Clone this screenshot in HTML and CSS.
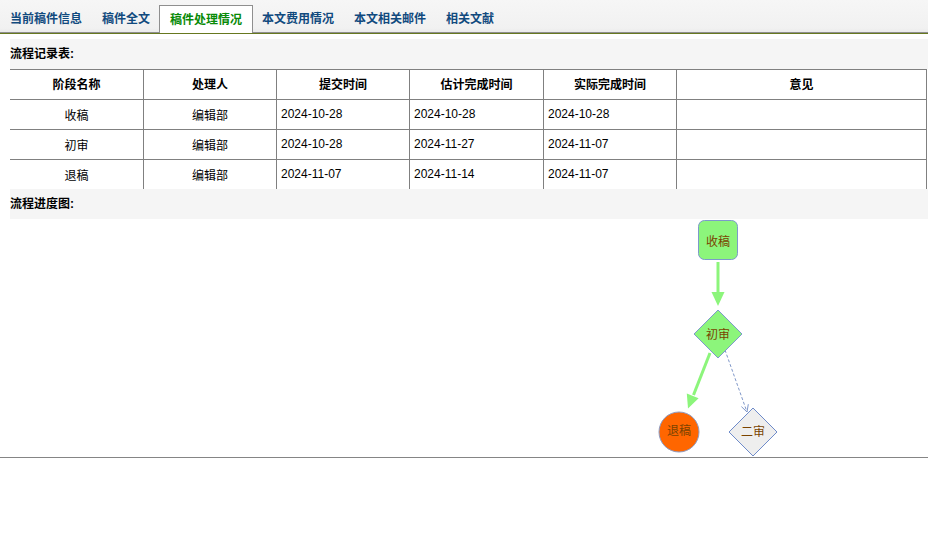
FILE: index.html
```html
<!DOCTYPE html>
<html lang="zh-CN">
<head>
<meta charset="utf-8">
<title>稿件处理情况</title>
<link rel="stylesheet" href="styles.css">
</head>
<body>
<div class="tabbar">
  <a class="tab">当前稿件信息</a>
  <a class="tab">稿件全文</a>
  <a class="tab active">稿件处理情况</a>
  <a class="tab">本文费用情况</a>
  <a class="tab">本文相关邮件</a>
  <a class="tab">相关文献</a>
</div>
<div class="content">
  <div class="section-title">流程记录表:</div>
  <table class="records">
    <colgroup>
      <col class="c1"><col class="c2"><col class="c3"><col class="c4"><col class="c5"><col class="c6">
    </colgroup>
    <thead>
      <tr><th>阶段名称</th><th>处理人</th><th>提交时间</th><th>估计完成时间</th><th>实际完成时间</th><th>意见</th></tr>
    </thead>
    <tbody>
      <tr><td class="center">收稿</td><td class="center">编辑部</td><td>2024-10-28</td><td>2024-10-28</td><td>2024-10-28</td><td></td></tr>
      <tr><td class="center">初审</td><td class="center">编辑部</td><td>2024-10-28</td><td>2024-11-27</td><td>2024-11-07</td><td></td></tr>
      <tr><td class="center">退稿</td><td class="center">编辑部</td><td>2024-11-07</td><td>2024-11-14</td><td>2024-11-07</td><td></td></tr>
    </tbody>
  </table>
  <div class="section-title">流程进度图:</div>
</div>
<div class="chart">
  <svg class="flow" width="928" height="238" viewBox="0 0 928 238">
    <!-- arrow 收稿 -> 初审 -->
    <line x1="718" y1="43" x2="718" y2="74" class="ok-line"/>
    <polygon points="711.5,73 724.5,73 718,87" class="ok-head"/>
    <!-- arrow 初审 -> 退稿 -->
    <line x1="710" y1="134" x2="693.5" y2="176" class="ok-line"/>
    <polygon points="698.6,179.3 686.8,174.6 688,189.5" class="ok-head"/>
    <!-- dashed 初审 -> 二审 -->
    <line x1="725" y1="131" x2="747" y2="193" class="todo-line"/>
    <polyline points="748.3,185.2 747,193 741.4,187.6" class="todo-head"/>
    <!-- nodes -->
    <rect x="698.5" y="1.5" width="39" height="39" rx="6" class="node done"/>
    <text x="718" y="27" class="label">收稿</text>
    <polygon points="694,115 718,91 742,115 718,139" class="node done"/>
    <text x="718" y="120" class="label">初审</text>
    <circle cx="679" cy="213" r="20" class="node reject"/>
    <text x="679" y="216" class="label">退稿</text>
    <polygon points="729,213 753,189 777,213 753,237" class="node pending"/>
    <text x="753" y="217" class="label">二审</text>
  </svg>
</div>
</body>
</html>
```

FILE: styles.css
```css
* { box-sizing: border-box; }
html, body {
  margin: 0;
  padding: 0;
  background: #ffffff;
  font-family: "Liberation Sans", "Noto Sans CJK SC", Arial, sans-serif;
  font-size: 12px;
  color: #000;
}
.tabbar {
  display: flex;
  align-items: flex-end;
  height: 34px;
  background: linear-gradient(#f6f6f6, #f1f1f1 85%, #e9e9e9);
  border-bottom: 1px solid #67781f;
  box-shadow: inset 0 -1px 0 #8e8e8e;
}
.tab {
  display: block;
  height: 28px;
  line-height: 27px;
  padding: 1px 10px 0 10px;
  font-weight: bold;
  color: #114a7e;
  text-decoration: none;
  white-space: nowrap;
}
.tab.active {
  background: #ffffff;
  color: #078a07;
  border: 1px solid #8f8f8f;
  border-bottom: none;
  padding: 1px 10px 0 10px;
  margin-left: -1px;
  margin-right: -1px;
}
.content {
  padding: 5px 0 0 10px;
}
.section-title {
  height: 30px;
  line-height: 31px;
  background: #f5f5f5;
  font-weight: bold;
}
.records {
  width: 917px;
  table-layout: fixed;
  border-collapse: separate;
  border-spacing: 0;
}
.records col.c1 { width: 134px; }
.records col.c2 { width: 133px; }
.records col.c3 { width: 133px; }
.records col.c4 { width: 134px; }
.records col.c5 { width: 133px; }
.records col.c6 { width: 250px; }
.records th,
.records td {
  height: 30px;
  padding: 0 4px;
  border-top: 1px solid #808080;
  border-right: 1px solid #808080;
  font-size: 12px;
  vertical-align: middle;
  white-space: nowrap;
}
.records th {
  font-weight: bold;
  text-align: center;
  padding-bottom: 2px;
}
.records td { text-align: left; padding-bottom: 1px; }
.records td.center { text-align: center; }
.chart {
  height: 239px;
  border-bottom: 1px solid #858585;
  box-shadow: 0 1px 0 #dcdcdc;
}
.flow { display: block; }
.ok-line { stroke: #8cf57b; stroke-width: 3; }
.ok-head { fill: #8cf57b; }
.todo-line { stroke: #7f97c9; stroke-width: 1; stroke-dasharray: 3 2; }
.todo-head { fill: none; stroke: #7f97c9; stroke-width: 1; }
.node { stroke: #7d9acb; stroke-width: 1; }
.node.done { fill: #8cf57b; }
.node.reject { fill: #ff6600; stroke: #8d9dc6; }
.node.pending { fill: #eeeeee; stroke: #6e8bca; }
.label {
  font-family: "Noto Sans CJK SC", "Liberation Sans", sans-serif;
  font-size: 12px;
  fill: #7a4300;
  text-anchor: middle;
}
```
